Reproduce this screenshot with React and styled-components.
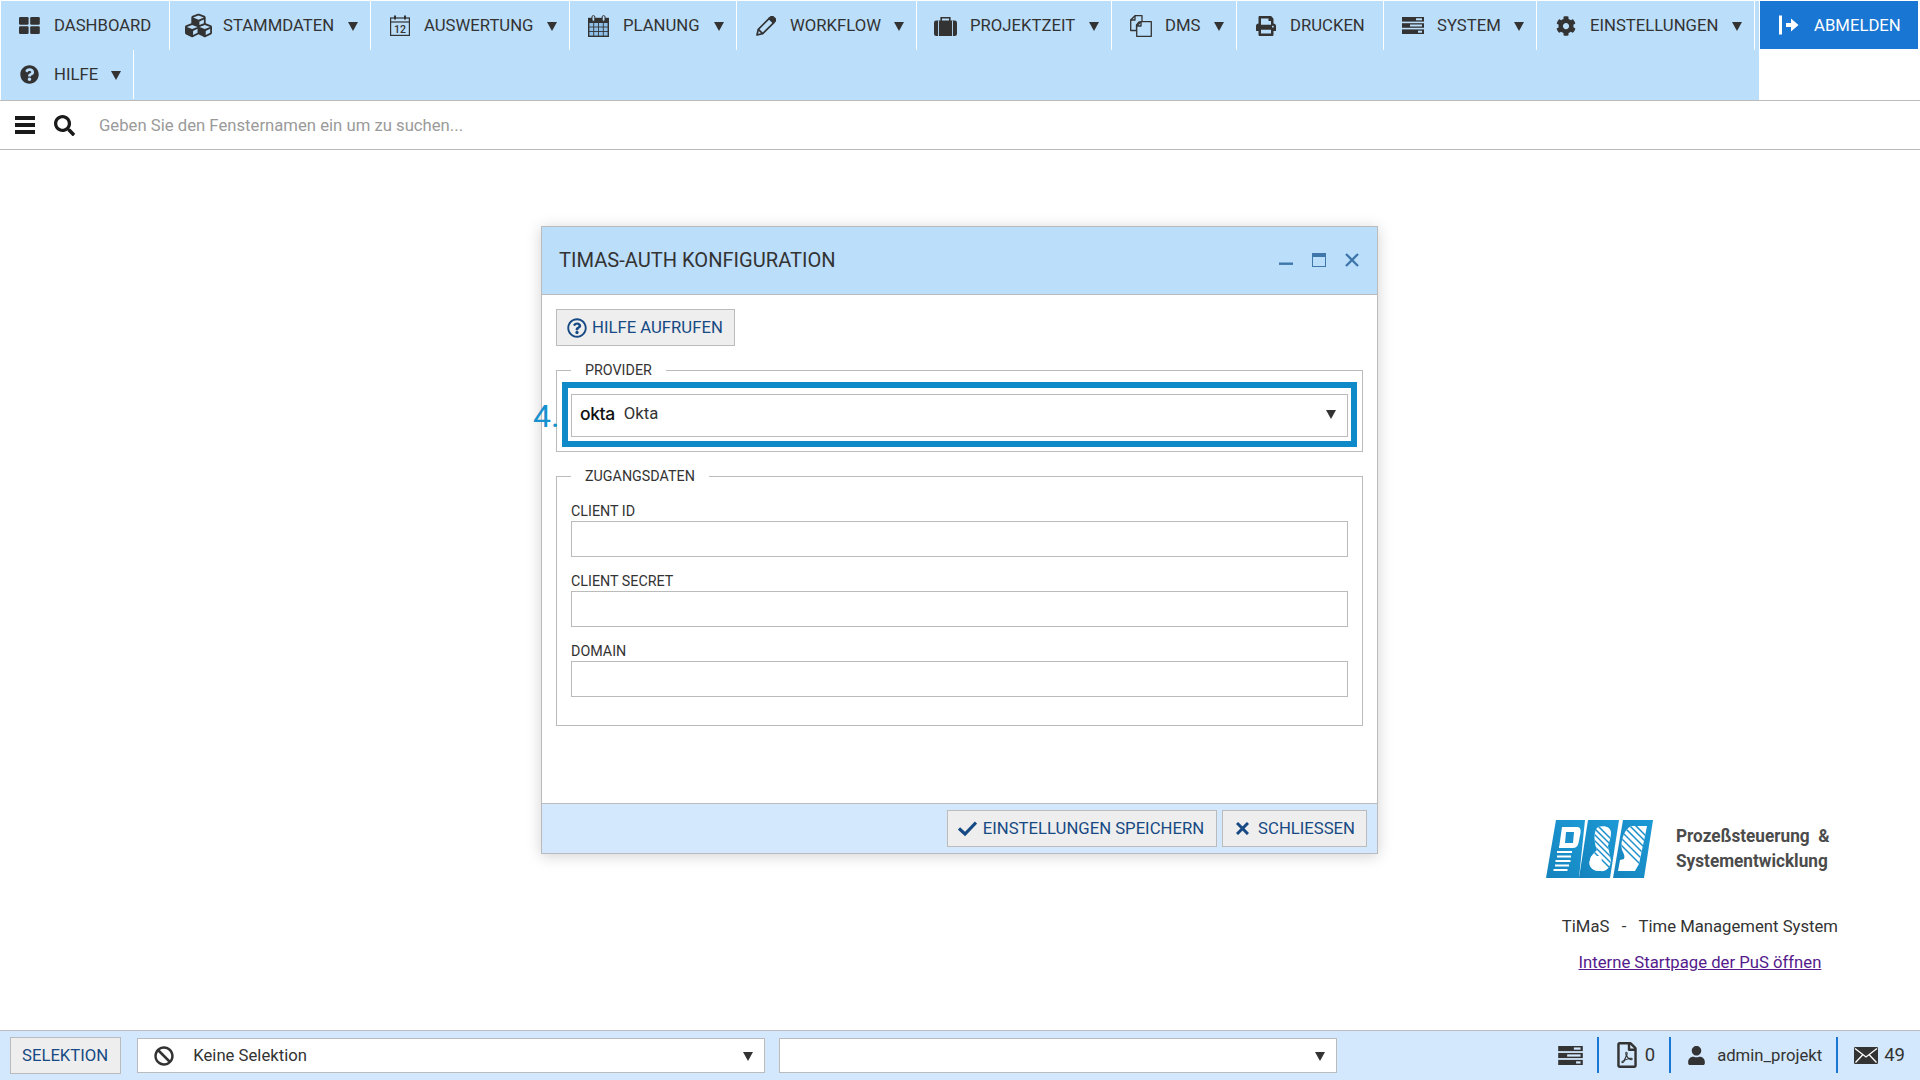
import React from "react";
import styled, { createGlobalStyle } from "styled-components";
import {
  FaCubes, FaQuestionCircle, FaPrint, FaCog, FaSearch,
  FaBan, FaUser, FaRegFilePdf, FaRegQuestionCircle,
} from "react-icons/fa";

const Global = createGlobalStyle`
  html, body { margin: 0; padding: 0; background: #fff; }
  body { font-family: Roboto, "Liberation Sans", sans-serif; font-size: 16.7px; color: #333; }
  * { box-sizing: border-box; }
`;

const Page = styled.div`
  width: 1920px; height: 1080px; display: flex; flex-direction: column; overflow: hidden;
`;
const TopBar = styled.header`
  display: flex; align-items: flex-start; height: 101px; padding: 1px 2px 0 1px;
  border-bottom: 1px solid #bbb;
`;
const Nav = styled.nav`
  width: 1759px; height: 99px; background: #bbdefb; display: flex; flex-wrap: wrap; align-content: flex-start;
`;
const NavItem = styled.div`
  width: ${(p) => p.$w}px; height: 49px; display: flex; align-items: center; padding: 0 12px 0 8px;
  border-right: 1px solid #fff; color: #333; white-space: nowrap;
`;
const IconSlot = styled.span`
  width: 41px; margin-right: 4px; display: flex; justify-content: center; align-items: center;
  flex: none; color: #333;
  svg { display: block; }
`;
const Caret = styled.span`
  width: 0; height: 0; flex: none; margin-left: auto; margin-top: 1px;
  border-left: 5.5px solid transparent; border-right: 5.5px solid transparent;
  border-top: 9px solid #333;
`;
const Logout = styled.div`
  width: 158px; height: 48px; margin-left: 1px; background: #1976d2; color: #fff;
  display: flex; align-items: center; padding-left: 19px; gap: 15px;
`;
const SearchRow = styled.div`
  height: 49px; display: flex; align-items: center; padding-left: 15px; border-bottom: 1px solid #bbb;
  svg { display: block; }
`;
const SearchIcon = styled(FaSearch)`
  width: 21px; height: 21px; margin-left: 19px; color: #1a1a1a;
`;
const SearchHint = styled.span`
  margin-left: 24px; color: #9a9a9a;
`;
const Main = styled.main`
  flex: 1; position: relative; display: flex; justify-content: flex-end; align-items: flex-end;
  padding: 0 82px 56px 0;
`;
const Window = styled.section`
  position: absolute; left: 541px; top: 76px; width: 837px; height: 628px;
  border: 1px solid #bbb; background: #fff; box-shadow: 0 2px 14px rgba(0,0,0,.18);
  display: flex; flex-direction: column;
`;
const WindowHead = styled.div`
  height: 68px; flex: none; background: #bbdefb; border-bottom: 1px solid #bbb;
  display: flex; align-items: center; justify-content: space-between; padding: 0 18px 2px 17px;
`;
const WindowTitle = styled.h1`
  margin: 0; font-size: 20.1px; font-weight: 400; color: #333;
`;
const WindowTools = styled.div`
  display: flex; gap: 19px; align-items: center; color: #3f77ab;
  svg { display: block; }
`;
const WindowBody = styled.div`
  flex: 1; padding: 14px 14px 0;
`;
const Button = styled.button`
  height: 37px; background: #eee; border: 1px solid #bbb; flex: none;
  padding: 0 ${(p) => p.$right}px 0 ${(p) => p.$left}px;
  display: inline-flex; align-items: center; gap: ${(p) => p.$gap || 5}px;
  font: 400 16.7px Roboto, sans-serif; color: #174a84; border-radius: 0; white-space: nowrap;
  svg { display: block; flex: none; }
`;
const Group = styled.fieldset`
  margin: ${(p) => p.$top}px 0 0; padding: ${(p) => p.$pad}; border: 1px solid #bbb; min-width: 0;
  height: ${(p) => p.$height}px;
`;
const Legend = styled.legend`
  margin-left: ${(p) => p.$left}px; padding: 0 14px; font-size: 14.3px; line-height: 16px; color: #333;
`;
const Highlight = styled.div`
  position: relative; border: 6px solid #0e8ac8; padding: 6px 3px 4px;
`;
const StepMark = styled.span`
  position: absolute; left: -35px; top: 10px; font-size: 32px; line-height: 36px; font-weight: 400; color: #1591cf;
`;
const SelectBox = styled.div`
  height: ${(p) => p.$height}px; width: ${(p) => p.$width || "auto"}; margin-left: ${(p) => p.$before || 0}px;
  background: #fff; border: 1px solid #bbb;
  display: flex; align-items: center; padding: 0 ${(p) => p.$right || 11}px ${(p) => p.$lift || 0}px ${(p) => p.$left || 8}px; color: #333;
  flex: none;
  svg { display: block; flex: none; }
`;
const OktaMark = styled.span`
  font-family: Inter, Lato, sans-serif; font-weight: 500; font-size: 17.5px; color: #111; letter-spacing: -0.4px; line-height: 1;
`;
const SelectText = styled.span`
  margin-left: ${(p) => p.$gap}px; color: #333;
`;
const Field = styled.div`
  margin-top: ${(p) => p.$top}px;
`;
const FieldLabel = styled.label`
  display: block; font-size: 14.3px; line-height: 18px; color: #333;
`;
const TextInput = styled.input`
  display: block; width: 100%; height: 36px; border: 1px solid #bbb; background: #fff; margin-top: 1px; outline: none;
`;
const WindowFoot = styled.div`
  height: 50px; flex: none; background: #d3e8fc; border-top: 1px solid #bbb;
  display: flex; justify-content: flex-end; align-items: center; gap: 5px; padding: 0 10px 0 0;
`;
const Corner = styled.div`
  display: flex; flex-direction: column; align-items: center;
`;
const BrandRow = styled.div`
  display: flex; align-items: center; gap: 23px; margin-left: -23px;
`;
const BrandText = styled.div`
  font-weight: 700; font-size: 18px; line-height: 25px; color: #4b4b4b; white-space: pre; margin-top: -2px;
  transform: scaleX(.955); transform-origin: left center; width: 154px;
`;
const Tagline = styled.div`
  margin-top: 38px; line-height: 22px; color: #333; white-space: pre;
`;
const PageLink = styled.a`
  margin-top: 14px; line-height: 22px; color: #551a8b; text-decoration: underline;
`;
const StatusBar = styled.footer`
  height: 50px; flex: none; background: #d3e8fc; border-top: 1px solid #bbb;
  display: flex; align-items: center; padding-left: 10px;
`;
const StatusGroup = styled.div`
  margin-left: auto; display: flex; align-items: center; height: 36px; margin-top: -1px;
  svg { display: block; flex: none; }
`;
const StatusCell = styled.div`
  height: 36px; display: flex; align-items: center; gap: ${(p) => p.$gap || 8}px;
  padding: 0 ${(p) => p.$right}px 0 ${(p) => p.$left}px; color: #333;
  ${(p) => (p.$line ? "border-left: 2px solid #1976d2;" : "")}
`;
const Count = styled.span`
  font-size: 18.5px; color: #333;
`;
const PdfIcon = styled(FaRegFilePdf)`
  width: 20px; height: 26px;
`;

/* drawn icons */
const DashIcon = () => (
  <svg width="21" height="17" viewBox="0 0 21 17" fill="#333">
    <rect x="0" y="0" width="9.6" height="7.8" rx="1.2" /><rect x="11.2" y="0" width="9.6" height="7.8" rx="1.2" />
    <rect x="0" y="9.2" width="9.6" height="7.8" rx="1.2" /><rect x="11.2" y="9.2" width="9.6" height="7.8" rx="1.2" />
  </svg>
);
const Calendar12 = () => (
  <svg width="20" height="21" viewBox="0 0 20 21" fill="none" stroke="#333">
    <rect x="0.6" y="3" width="18.8" height="17.4" strokeWidth="1.2" />
    <line x1="0.6" y1="7" x2="19.4" y2="7" strokeWidth="1.2" />
    <rect x="4" y="0.5" width="2" height="4" fill="#333" stroke="none" />
    <rect x="14" y="0.5" width="2" height="4" fill="#333" stroke="none" />
    <text x="10" y="18" textAnchor="middle" fontFamily="Roboto, sans-serif" fontSize="10.5" fontWeight="500" fill="#333" stroke="none">12</text>
  </svg>
);
const CalendarGrid = () => (
  <svg width="21" height="22" viewBox="0 0 21 22" fill="none">
    <rect x="1" y="5" width="19" height="16" fill="#8fc0ea" />
    <rect x="0.7" y="3.5" width="19.6" height="17.8" stroke="#333" strokeWidth="1.4" />
    <rect x="1" y="3.5" width="19" height="4.5" fill="#333" />
    <path d="M1 12h19M1 16.5h19M5.7 8v13M10.500 8v13M15.300 8v13" stroke="#333" strokeWidth="0.9" />
    <rect x="4" y="0.6" width="2.8" height="5.6" rx="1.3" fill="#bbdefb" stroke="#333" strokeWidth="1" />
    <rect x="14.2" y="0.6" width="2.8" height="5.6" rx="1.3" fill="#bbdefb" stroke="#333" strokeWidth="1" />
  </svg>
);
const PencilIcon = () => (
  <svg width="20" height="20" viewBox="0 0 20 20" fill="none" stroke="#333" strokeWidth="1.700" strokeLinejoin="round">
    <path d="M1 19l1.300-5.700L13.200 2.400l4.400 4.400L6.700 17.700z" />
    <path d="M2.300 13.300l4.400 4.400" />
    <path d="M14.500 1.200c1-.9 2-.9 2.800-.1l1.600 1.600c.8.800.8 1.800-.1 2.800l-1.200 1.200-4.400-4.400z" fill="#333" />
  </svg>
);
const SuitcaseIcon = () => (
  <svg width="23" height="20" viewBox="0 0 23 20" fill="none">
    <path d="M7.200 5V1.800h8.600V5" stroke="#333" strokeWidth="1.600" />
    <rect x="0" y="4.500" width="23" height="15.500" rx="2.200" fill="#333" />
    <path d="M4.500 4.500V20M18.500 4.500V20" stroke="#bbdefb" strokeWidth="0.900" />
  </svg>
);
const CopyIcon = () => (
  <svg width="22" height="22" viewBox="0 0 22 22" fill="none" stroke="#333" strokeWidth="1.300" strokeLinejoin="round">
    <path d="M5 .7h7v6.300H9l-2.500 3v5.500H.7V5z" />
    <path d="M5 .7V5H.7" />
    <path d="M11 6.700h10.300v14.600H6.700V11z" fill="#bbdefb" />
    <path d="M11 6.700V11H6.700" />
  </svg>
);
const ServerIcon = ({ w = 22, h = 17, bg = "#bbdefb" }) => (
  <svg width={w} height={h} viewBox="0 0 22 17">
    <rect width="22" height="4.600" y="0" fill="#333" /><rect width="22" height="4.600" y="6.200" fill="#333" /><rect width="22" height="4.600" y="12.400" fill="#333" />
    <rect x="14" y="1.300" width="6" height="2" fill={bg} /><rect x="8" y="7.500" width="12" height="2" fill={bg} /><rect x="16" y="13.700" width="4" height="2" fill={bg} />
  </svg>
);
const LogoutIcon = () => (
  <svg width="20" height="20" viewBox="0 0 20 20" fill="#fff">
    <rect x="0" y="0.500" width="3" height="19" />
    <path d="M7 8h5V3.600L19.500 10 12 16.400V12H7z" />
  </svg>
);
const Bars = () => (
  <svg width="20" height="18" viewBox="0 0 20 18" fill="#1a1a1a">
    <rect width="20" height="4" y="0" /><rect width="20" height="4" y="7" /><rect width="20" height="4" y="14" />
  </svg>
);
const CheckIcon = () => (
  <svg width="19" height="15" viewBox="0 0 19 15" fill="none" stroke="currentColor" strokeWidth="3.200"><path d="M1 7.500l6 5.500L18 1.500" /></svg>
);
const CrossIcon = () => (
  <svg width="13" height="13" viewBox="0 0 13 13" fill="none" stroke="currentColor" strokeWidth="3"><path d="M1 1l11 11M12 1L1 12" /></svg>
);
const WinMin = () => <svg width="14" height="14" viewBox="0 0 14 14" fill="currentColor"><rect y="9.500" width="14" height="2.400" /></svg>;
const WinMax = () => (
  <svg width="14" height="14" viewBox="0 0 14 14" fill="none" stroke="currentColor"><rect x=".5" y=".5" width="13" height="13" /><rect x=".5" y=".5" width="13" height="3" fill="currentColor" /></svg>
);
const WinClose = () => (
  <svg width="14" height="14" viewBox="0 0 14 14" fill="none" stroke="currentColor" strokeWidth="2.400"><path d="M1 1l12 12M13 1L1 13" /></svg>
);
const Mail = () => (
  <svg width="24" height="17" viewBox="0 0 24 17">
    <rect width="24" height="17" rx="1.200" fill="#333" />
    <path d="M1 1.500l11 8.500 11-8.500M1.500 15.500l7.500-8M22.500 15.500l-7.500-8" stroke="#fff" strokeWidth="1.300" fill="none" />
  </svg>
);
const PusLogo = () => (
  <svg width="107" height="58" viewBox="0 0 107 58">
    <defs>
      <linearGradient id="pusg" x1="0" x2="1" y1="1" y2="0"><stop offset="0" stopColor="#1583bd" /><stop offset="1" stopColor="#1c9ad6" /></linearGradient>
      <clipPath id="amp"><path d="M52 7c8-2 13 1 13 6 0 5-2 9-3 13l3 15c-1 7-5 11-11 10-8 0-12-5-10-11 1-5 5-8 7-10 -3-7-4-19 1-23z" /></clipPath>
      <clipPath id="ess"><path d="M85 6h16l-2 10-3 14-3 14-4 7H72l2-11 4-1c1-3 0-5-2-9-2-6 1-20 9-24z" /></clipPath>
    </defs>
    <path d="M10 0h29l-6 58H0z" fill="url(#pusg)" />
    <path d="M42 0h31l-9 58H33z" fill="url(#pusg)" />
    <path d="M77 0h30L98 58H67z" fill="url(#pusg)" />
    <path d="M16 7h15c3 0 4 2 3.500 6l-2 10c-1 4-3 5-6 5H13z" fill="#fff" />
    <path d="M20 12h8l-1 11h-8z" fill="#1a8fcb" />
    <path d="M13 27h14M11 32h15M11 36.500h14M9.500 41h15M9 45.500h14M7.500 50h14" stroke="#fff" strokeWidth="2.200" />
    <g clipPath="url(#amp)">
      <rect x="30" y="0" width="40" height="60" fill="#fff" />
      <path d="M40 0l40 40M36 2l40 40M32 4l40 40M28 6l40 40M24 8l40 40M44-2l36 36" stroke="#1a8fcb" strokeWidth="1.500" />
      <path d="M38 36h18l-2 18H36z" fill="#fff" />
    </g>
    <g clipPath="url(#ess)">
      <rect x="68" y="0" width="40" height="60" fill="#fff" />
      <path d="M78 0l36 36M74 3l36 36M70 6l36 36M66 9l36 36M62 12l36 36M82-2l30 30" stroke="#1a8fcb" strokeWidth="1.500" />
    </g>
  </svg>
);

const items = [
  { label: "DASHBOARD", w: 169, icon: <DashIcon /> },
  { label: "STAMMDATEN", w: 201, icon: <FaCubes size={27} />, arrow: true },
  { label: "AUSWERTUNG", w: 199, icon: <Calendar12 />, arrow: true },
  { label: "PLANUNG", w: 167, icon: <CalendarGrid />, arrow: true },
  { label: "WORKFLOW", w: 180, icon: <PencilIcon />, arrow: true },
  { label: "PROJEKTZEIT", w: 195, icon: <SuitcaseIcon />, arrow: true },
  { label: "DMS", w: 125, icon: <CopyIcon />, arrow: true },
  { label: "DRUCKEN", w: 147, icon: <FaPrint size={20} /> },
  { label: "SYSTEM", w: 153, icon: <ServerIcon />, arrow: true },
  { label: "EINSTELLUNGEN", w: 218, icon: <FaCog size={20} />, arrow: true },
  { label: "HILFE", w: 133, icon: <FaQuestionCircle size={19} />, arrow: true },
];

const CredentialField = ({ label, top }) => (
  <Field $top={top}>
    <FieldLabel>{label}</FieldLabel>
    <TextInput />
  </Field>
);

export default function App() {
  return (
    <Page>
      <Global />
      <TopBar>
        <Nav>
          {items.map((it) => (
            <NavItem key={it.label} $w={it.w}>
              <IconSlot>{it.icon}</IconSlot>
              {it.label}
              {it.arrow && <Caret />}
            </NavItem>
          ))}
        </Nav>
        <Logout><LogoutIcon />ABMELDEN</Logout>
      </TopBar>
      <SearchRow>
        <Bars />
        <SearchIcon />
        <SearchHint>Geben Sie den Fensternamen ein um zu suchen...</SearchHint>
      </SearchRow>
      <Main>
        <Window>
          <WindowHead>
            <WindowTitle>TIMAS-AUTH KONFIGURATION</WindowTitle>
            <WindowTools><WinMin /><WinMax /><WinClose /></WindowTools>
          </WindowHead>
          <WindowBody>
            <Button $left={10} $right={11}><FaRegQuestionCircle size={20} />HILFE AUFRUFEN</Button>
            <Group $top={16} $height={90} $pad="4px 5px 4px">
              <Legend $left={9}>PROVIDER</Legend>
              <Highlight>
                <StepMark>4.</StepMark>
                <SelectBox $height={43} $lift={4}>
                  <OktaMark>okta</OktaMark>
                  <SelectText $gap={9}>Okta</SelectText>
                  <Caret />
                </SelectBox>
              </Highlight>
            </Group>
            <Group $top={16} $height={258} $pad="0 14px">
              <Legend $left={0}>ZUGANGSDATEN</Legend>
              <CredentialField label="CLIENT ID" top={18} />
              <CredentialField label="CLIENT SECRET" top={15} />
              <CredentialField label="DOMAIN" top={15} />
            </Group>
          </WindowBody>
          <WindowFoot>
            <Button $left={10} $right={12} $gap={6}><CheckIcon />EINSTELLUNGEN SPEICHERN</Button>
            <Button $left={13} $right={11} $gap={9}><CrossIcon />SCHLIESSEN</Button>
          </WindowFoot>
        </Window>
        <Corner>
          <BrandRow>
            <PusLogo />
            <BrandText>{"Prozeßsteuerung  &\nSystementwicklung"}</BrandText>
          </BrandRow>
          <Tagline>{"TiMaS   -   Time Management System"}</Tagline>
          <PageLink href="#">Interne Startpage der PuS öffnen</PageLink>
        </Corner>
      </Main>
      <StatusBar>
        <Button $left={11} $right={12}>SELEKTION</Button>
        <SelectBox $width="628px" $height={35} $left={16} $right={11} $before={16}>
          <FaBan size={20} />
          <SelectText $gap={19}>Keine Selektion</SelectText>
          <Caret />
        </SelectBox>
        <SelectBox $width="558px" $height={35} $right={11} $before={14}>
          <Caret />
        </SelectBox>
        <StatusGroup>
          <StatusCell $right={13} $left={0}><ServerIcon w={27} h={19} bg="#d3e8fc" /></StatusCell>
          <StatusCell $line $left={18} $right={14}><PdfIcon /><Count>0</Count></StatusCell>
          <StatusCell $line $left={16} $right={14} $gap={11}><FaUser size={19} />admin_projekt</StatusCell>
          <StatusCell $line $left={16} $right={15} $gap={6}><Mail /><Count>49</Count></StatusCell>
        </StatusGroup>
      </StatusBar>
    </Page>
  );
}
